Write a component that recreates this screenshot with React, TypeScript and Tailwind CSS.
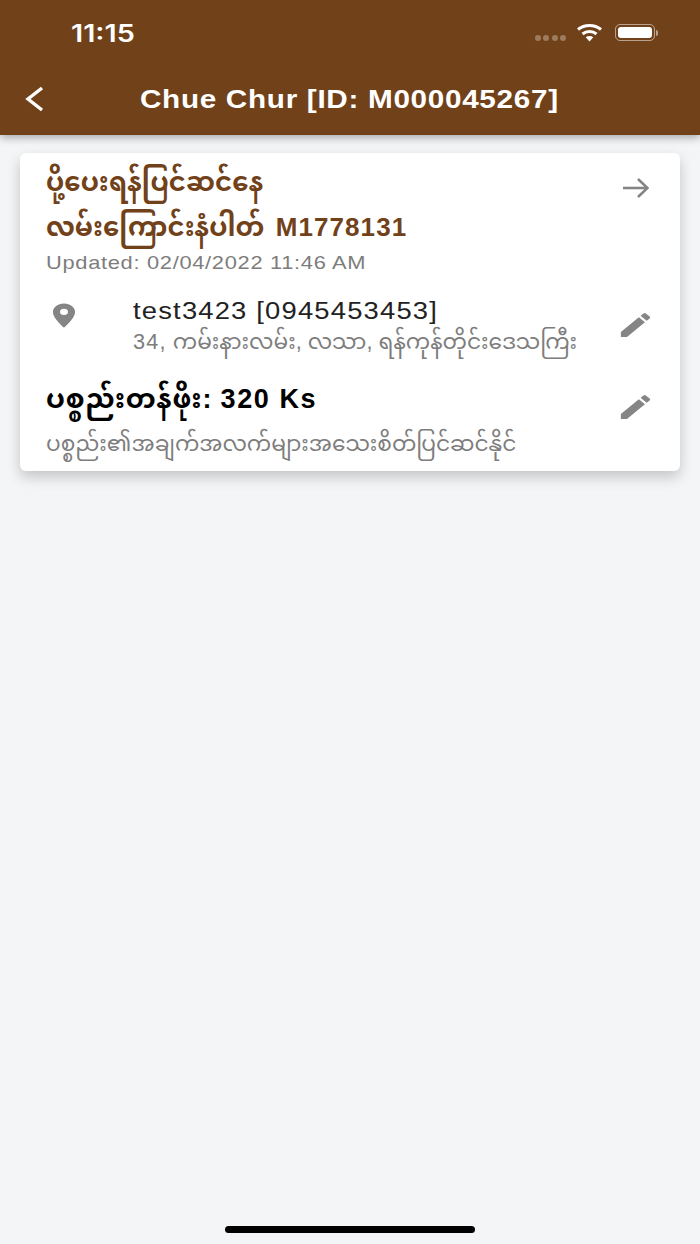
import React from 'react';

const font = { fontFamily: '"Liberation Sans", "Noto Sans", "Noto Sans Myanmar", sans-serif' };

const PencilIcon = () => (
  <svg width="39" height="32" viewBox="0 0 24 24" preserveAspectRatio="none" fill="#858585">
    <path d="M3 17.25V21h3.75L17.81 9.94l-3.75-3.75L3 17.25zM20.71 7.04a1 1 0 0 0 0-1.41l-2.34-2.34a1 1 0 0 0-1.41 0l-1.83 1.83 3.75 3.75 1.83-1.83z" />
  </svg>
);

const PinIcon = () => (
  <svg width="38" height="29" viewBox="0 0 24 24" preserveAspectRatio="none" fill="#858585">
    <path d="M12 2C8.13 2 5 5.13 5 9c0 5.25 7 13 7 13s7-7.75 7-13c0-3.87-3.13-7-7-7zm0 9.5a2.5 2.5 0 1 1 0-5 2.5 2.5 0 0 1 0 5z" />
  </svg>
);

const ArrowIcon = () => (
  <svg width="26" height="20" viewBox="0 0 26 20" fill="none" stroke="#858585" strokeWidth="2.6">
    <path d="M0 10h24.5" />
    <path d="M15 1l9.5 9-9.5 9" />
  </svg>
);

const BackIcon = () => (
  <svg width="20" height="26" viewBox="0 0 20 26" fill="none" stroke="white" strokeWidth="3.4">
    <path d="M18 2L4 13l14 11" />
  </svg>
);

const WifiIcon = () => (
  <svg width="27" height="19" viewBox="0 0 26 19" fill="none" stroke="white" strokeWidth="3">
    <path d="M1.5 6.5C8 1 18 1 24.5 6.5" />
    <path d="M6 11c4-3.2 10-3.2 14 0" />
    <path d="M13 18.5l-3.8-4.2c2.2-1.6 5.4-1.6 7.6 0L13 18.5z" fill="white" stroke="none" />
  </svg>
);

const StatusBar = () => (
  <div className="h-[62px] flex items-start justify-between pt-[20px] pl-[71px] pr-[42px]">
    <span className="block text-[24px] font-semibold leading-[28px] text-white origin-left scale-x-[1.2]" style={{ fontFamily: 'Inter, sans-serif' }}>11:15</span>
    <div className="flex items-start mt-[3px]">
      <div className="flex gap-[2.5px] mr-[10px] mt-[12px]">
        <span className="w-[6px] h-[6px] rounded-full bg-white/30" />
        <span className="w-[6px] h-[6px] rounded-full bg-white/30" />
        <span className="w-[6px] h-[6px] rounded-full bg-white/30" />
        <span className="w-[6px] h-[6px] rounded-full bg-white/30" />
      </div>
      <WifiIcon />
      <div className="ml-[12px] mt-[1px] w-[40px] h-[17px] rounded-[5px] border border-white/50 p-[2px]">
        <div className="w-full h-full rounded-[3px] bg-white" />
      </div>
      <div className="w-[2px] h-[6px] rounded-r-sm bg-white/50 ml-[1px] mt-[7px]" />
    </div>
  </div>
);

export default function App() {
  return (
    <div className="relative min-h-[1244px] bg-[#f4f5f7]" style={font}>
      <header className="h-[135px] bg-[#71421a] shadow-[0_3px_8px_rgba(0,0,0,0.3)]">
        <StatusBar />
        <div className="relative h-[73px] flex items-center justify-center">
          <div className="absolute left-[24px] top-[24px]"><BackIcon /></div>
          <h1 className="text-[26px] font-bold text-white tracking-[0.6px] leading-none mt-[1px] -ml-[2px] scale-x-[1.142]">Chue Chur [ID: M000045267]</h1>
        </div>
      </header>

      <main className="px-[20px] pt-[18px]">
        <div className="h-[318px] bg-white rounded-[6px] shadow-[0_6px_14px_rgba(0,0,0,0.2)] pl-[26px] pr-[25px] pt-[9px]">
          <div className="flex justify-between items-start">
            <div>
              <div className="h-[45px] text-[26px] font-bold leading-[40px] text-[#71421a] tracking-[0.1px]">ပို့ပေးရန်ပြင်ဆင်နေ</div>
              <div className="h-[43px] text-[26px] font-bold leading-[40px] text-[#71421a]">လမ်းကြောင်းနံပါတ် <span className="ml-[4px] tracking-[1.1px]">M1778131</span></div>
              <div className="text-[19px] leading-[26px] text-[#7d7d7d] tracking-[0.6px] origin-left scale-x-[1.15]">Updated: 02/04/2022 11:46 AM</div>
            </div>
            <div className="mt-[16px] mr-[6px]"><ArrowIcon /></div>
          </div>

          <div className="flex items-start justify-between mt-[21px]">
            <div className="flex">
              <div className="w-[87px] mt-[4px]"><div className="-ml-[1px]"><PinIcon /></div></div>
              <div>
                <div className="text-[23px] leading-[28px] text-[#222] tracking-[1px] origin-left scale-x-[1.19]">test3423 [0945453453]</div>
                <div className="text-[21.7px] leading-[30px] mt-[2px] text-[#7d7d7d]"><span className="tracking-[1.2px]">34,</span> ကမ်းနားလမ်း, လသာ, ရန်ကုန်တိုင်းဒေသကြီး</div>
              </div>
            </div>
            <div className="mt-[12px]"><PencilIcon /></div>
          </div>

          <div className="flex items-start justify-between mt-[22px]">
            <div>
              <div className="text-[27px] font-bold leading-[40px] text-black tracking-[0.8px]">ပစ္စည်းတန်ဖိုး: <span className="tracking-[1.6px]">320 Ks</span></div>
              <div className="text-[21.7px] leading-[30px] mt-[10px] text-[#7d7d7d]">ပစ္စည်း၏အချက်အလက်များအသေးစိတ်ပြင်ဆင်နိုင်</div>
            </div>
            <div className="mt-[12px]"><PencilIcon /></div>
          </div>
        </div>
      </main>

      <div className="absolute left-[225px] bottom-[11px] w-[250px] h-[7px] rounded-full bg-black" />
    </div>
  );
}
